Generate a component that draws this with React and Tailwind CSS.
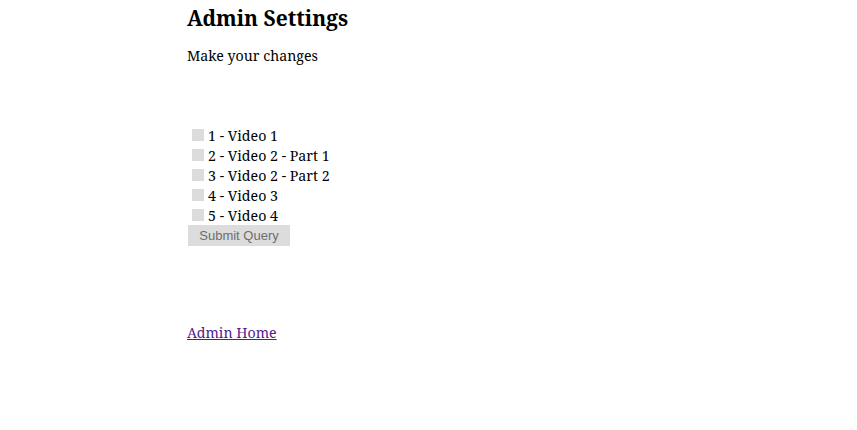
import React from 'react';

const videos = [
  { id: 1, title: 'Video 1' },
  { id: 2, title: 'Video 2 - Part 1' },
  { id: 3, title: 'Video 2 - Part 2' },
  { id: 4, title: 'Video 3' },
  { id: 5, title: 'Video 4' },
];

const App = () => {
  return (
    <div className="min-h-screen bg-white text-black font-['Noto_Serif',serif]">
      <div className="pl-[187px] pt-[3px]">
        <h1 className="text-[21px] font-bold leading-[30px]">Admin Settings</h1>
        <p className="mt-[13px] text-[14.2px] leading-[20px]">Make your changes</p>

        {/* Video list */}
        <form className="mt-[60px]">
          {videos.map((v) => (
            <label key={v.id} className="flex items-center h-[20px] text-[14.2px]">
              <span className="ml-[5px] mr-[4px] -mt-[2px] w-[12px] h-[12px] bg-[#dcdcdc] inline-block" />
              <span>{v.id} - {v.title}</span>
            </label>
          ))}
          <button
            type="button"
            className="block ml-[1px] -mt-[1px] w-[102px] h-[21px] bg-[#dcdcdc] text-[#6d6d6d] text-[13px] font-['Liberation_Sans',Arial,sans-serif]"
          >
            Submit Query
          </button>
        </form>

        <a href="#" className="block mt-[77px] text-[14.2px] leading-[20px] text-[#551a8b] underline">
          Admin Home
        </a>
      </div>
    </div>
  );
};

export default App;
